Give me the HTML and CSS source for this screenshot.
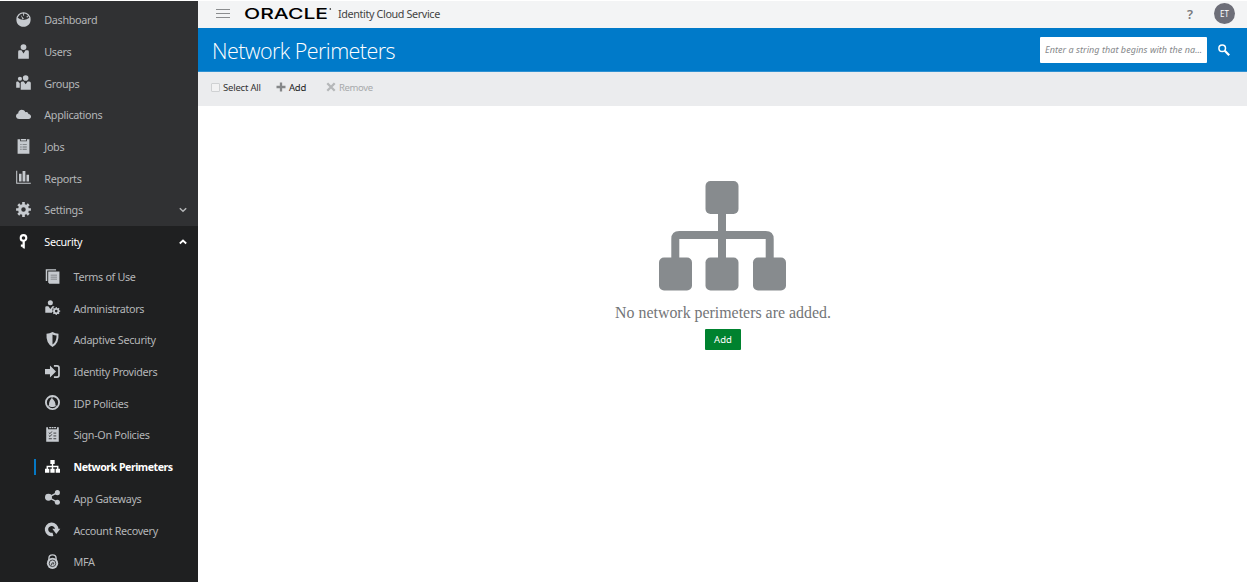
FILE: index.html
```html
<!DOCTYPE html>
<html lang="en">
<head>
<meta charset="utf-8">
<title>Network Perimeters</title>
<link rel="stylesheet" href="styles.css">
</head>
<body>
<div class="app">
<nav class="sidebar">
  <ul class="menu">
    <li class="item"><svg class="icon" viewBox="0 0 16 16"><path fill-rule="evenodd" d="M8 .3a7.600 7.600 0 0 1 7.600 7.600C15.600 12.400 12.500 15.700 8 15.700S.4 12.400.4 7.900A7.600 7.600 0 0 1 8 .3zM1.800 6.200q2.500 2.300 6.200 2.300t6.200-2.300Q12.300 1.600 8 1.600T1.800 6.200z"/><path d="m5 3 3.500 4.500L7 8zM7.600 1h1v3h-1zM11 5l2.500-1.500L12 6z"/></svg><span>Dashboard</span></li>
    <li class="item"><svg class="icon" viewBox="0 0 16 16"><circle cx="8" cy="3.300" r="3.100"/><path d="M2.300 15.700V8.200q0-1.500 1.500-1.500h2L8 10l2.200-3.300h2q1.500 0 1.500 1.500v7.500z"/></svg><span>Users</span></li>
    <li class="item"><svg class="icon" viewBox="0 0 16 16"><circle cx="10.300" cy="3.200" r="3"/><circle cx="4.200" cy="4" r="2.200"/><path d="M5 15.700V8.400q0-1.600 1.500-1.600h1.700l2.100 3 2.100-3h1.700q1.700 0 1.700 1.600v7.300zM.2 13.500V8q0-1.200 1.200-1.200h.8l1.800 2v4.700z"/></svg><span>Groups</span></li>
    <li class="item"><svg class="icon" viewBox="0 0 16 16"><path d="M3.500 12.800C-.9 12.800-.9 7.500 2.300 7 2.500 2 8.500 2 10 5.500c2-.8 3.200.5 3.200 2 3.900.3 3.600 5.300.2 5.300z"/></svg><span>Applications</span></li>
    <li class="item"><svg class="icon" viewBox="0 0 16 16"><path d="M1.700.3h2.700v2.200h7.200V.3h2.700v15.500H1.700z"/><path d="M5.200 0h5.600v1.700H5.200z"/><path class="cut" d="M4.500 5.500H6v1H4.500zm2.500 0h4.500v1H7zM4.500 8H6v1H4.500zM7 8h4.500v1H7zm-2.500 2.500H6v1H4.500zm2.500 0h4.500v1H7z"/></svg><span>Jobs</span></li>
    <li class="item"><svg class="icon" viewBox="0 0 16 16"><path d="M.2.700h1.100v12.800h14.500v1.200H.2zM3.200 4h2.700v8.300H3.200zM7 1h3v11.300H7zM11.200 5h2.700v7.300h-2.700z"/></svg><span>Reports</span></li>
    <li class="item"><svg class="icon" viewBox="0 0 16 16"><circle class="line gear-ring" cx="8" cy="8" r="4.100"/><path class="line gear-teeth" d="M8 .1v3m0 9.800v3M.1 8h3m9.800 0h3M2.400 2.400l2.100 2.100m7 7 2.100 2.100m0-11.200-2.100 2.100m-7 7-2.100 2.100"/></svg><span>Settings</span><svg class="chevron" viewBox="0 0 8 6"><path class="line" d="m.8 1.300 3.200 3 3.200-3"/></svg></li>
  </ul>
  <div class="section">
    <div class="item open"><svg class="icon" viewBox="0 0 16 16"><circle class="line key" cx="8" cy="4.200" r="3"/><path d="M7 7h2.400v8.800L7 15v-1.500h-1.800v-2.300H7z"/></svg><span>Security</span><svg class="chevron" viewBox="0 0 8 6"><path class="line strong" d="m.8 4.500 3.200-3 3.200 3"/></svg></div>
    <ul class="submenu">
      <li class="item"><svg class="icon" viewBox="0 0 16 16"><path d="M.8.200h11v1.500H2.400v11.100H.8zM3.400 2.700h12v13H4.700l-1.300-1.300z"/><path class="cut" d="M6 6h6.800v.9H6zm0 2.200h6.800v.9H6zm0 2.200h6.800v.9H6z"/></svg><span>Terms of Use</span></li>
      <li class="item"><svg class="icon" viewBox="0 0 16 16"><circle cx="5.700" cy="2.900" r="2.700"/><path d="M.3 13.500V8q0-1.300 1.200-1.300h2.100l2.100 3 2.200-3h2.300L8 9.300l-.5 4.200z"/><circle class="line ring" cx="12" cy="11.800" r="2.400"/><path class="line teeth" d="M12 7.500v1.500m0 5.500v1.500m-4.300-4.200h1.500m5.500 0h1.500M9 8.800l1 1m4 4 1 1m0-6-1 1m-4 4-1 1"/></svg><span>Administrators</span></li>
      <li class="item"><svg class="icon" viewBox="0 0 16 16"><path fill-rule="evenodd" d="M8 .1q3 1.700 6.400 1.700Q15.200 12 8 15.900.8 12 1.600 1.800 5 1.800 8 .1zM8 2.600v10.800Q12.500 10.500 12.300 3.800 10 3.700 8 2.600z"/></svg><span>Adaptive Security</span></li>
      <li class="item"><svg class="icon" viewBox="0 0 16 16"><path d="M0 5.200h5.300V1.600L11.700 8l-6.400 6.400v-3.600H0z"/><path class="line bracket" d="M9.500 2h3.300q2.100 0 2.100 2v8q0 2-2.100 2H9.500"/></svg><span>Identity Providers</span></li>
      <li class="item"><svg class="icon" viewBox="0 0 16 16"><circle class="line globe" cx="8" cy="8" r="7"/><path d="M4.300 11.700C4 7.500 5.300 5 7.300 3.500c2.700 2 4.200 4.500 3.900 8.200-1.500 1.600-5.500 1.600-6.900 0z"/><path class="line thin" d="m4.500 11.500-2.500 1m9-1 3 1M7.300 4l.5-2.500"/></svg><span>IDP Policies</span></li>
      <li class="item"><svg class="icon" viewBox="0 0 16 16"><path d="M1.300.2h2v2.100h9.400V.2h2v15.600H1.300z"/><path d="M4.500 0h2v1.400h-2zm2.600 0h2v1.400h-2zm2.600 0h2v1.400h-2z"/><path class="cutline" d="m4 6 1.300 1.200 2-2.400M9 6.500h3M4 9l1.300 1.200 2-2.400M9 9.500h3m-8 3h3.300m1.700 0h3"/></svg><span>Sign-On Policies</span></li>
      <li class="item current"><svg class="icon" viewBox="0 0 16 16"><path d="M5.700 1h4.600v4.300H5.700zM0 10.500h4.600v4.200H0zm5.700 0h4.600v4.200H5.700zm5.700 0H16v4.200h-4.600z"/><path class="line" d="M8 5v6M2.400 11V8h11.200v3"/></svg><span>Network Perimeters</span></li>
      <li class="item"><svg class="icon" viewBox="0 0 16 16"><circle cx="3.700" cy="7.800" r="3.700"/><circle cx="13.200" cy="2.800" r="2.700"/><circle cx="13.200" cy="13" r="2.700"/><path class="line" d="M13 2.900 3.700 7.800l9.300 5.200"/></svg><span>App Gateways</span></li>
      <li class="item"><svg class="icon" viewBox="0 0 16 16"><path class="line recover" d="M8.500 13.200A5.500 5.500 0 1 1 12.600 8"/><path d="M7.800 7.300H16.300L12 12.800z"/></svg><span>Account Recovery</span></li>
      <li class="item"><svg class="icon" viewBox="0 0 16 16"><path class="line" d="M4.200 7V4.500Q4.200.9 8 .9t3.800 3.600V7"/><circle cx="8" cy="9.900" r="6"/><circle class="cutline" cx="8" cy="9.900" r="3.500"/><path class="cutline" d="m6.800 12 .7-2.500h2l-.7 1.700"/></svg><span>MFA</span></li>
    </ul>
  </div>
</nav>
<main class="main">
  <header class="topbar">
    <svg class="burger" viewBox="0 0 14 9"><path d="M0 .5h14M0 4.500h14M0 8.500h14"/></svg>
    <svg class="brand" viewBox="0 0 90 22"><text class="brand-name" x="0" y="16" textLength="84" lengthAdjust="spacingAndGlyphs">ORACLE</text><circle cx="86.300" cy="6" r=".8"/></svg>
    <span class="product">Identity Cloud Service</span>
    <span class="help">?</span>
    <span class="avatar">ET</span>
  </header>
  <div class="titlebar">
    <h1>Network Perimeters</h1>
    <div class="search">Enter a string that begins with the na...</div>
    <svg class="magnifier" viewBox="0 0 12 12"><circle cx="4.200" cy="4.200" r="3.300"/><path class="handle" d="m6.800 6.800 4.400 4.400"/></svg>
  </div>
  <div class="toolbar">
    <span class="checkbox"></span><span class="tool select">Select All</span>
    <svg class="plus" viewBox="0 0 10 10"><path d="M5 .5v9M.5 5h9"/></svg><span class="tool add">Add</span>
    <svg class="cross" viewBox="0 0 10 10"><path d="m1.300 1.300 7.400 7.400m0-7.400L1.300 8.700"/></svg><span class="tool remove">Remove</span>
  </div>
  <section class="empty">
    <svg class="network" viewBox="0 0 128 110"><rect x="46.500" y="0" width="33" height="33" rx="5"/><rect x="0" y="76.500" width="33" height="33" rx="5"/><rect x="46.500" y="76.500" width="33" height="33" rx="5"/><rect x="94" y="76.500" width="33" height="33" rx="5"/><path d="M63 32v46M16.300 78V58q0-4 4-4h86.400q4 0 4 4v20"/></svg>
    <p>No network perimeters are added.</p>
    <button class="primary">Add</button>
  </section>
</main>
</div>
</body>
</html>
```
FILE: styles.css
```css
* { box-sizing: border-box; }
body { margin: 0; background: #fff; font-family: "Noto Sans", "Open Sans", sans-serif; font-size: 11px; }
ul { list-style: none; margin: 0; padding: 0; }
.app { display: flex; width: 1247px; height: 581px; margin-top: 1px; }
.sidebar { width: 198px; flex: none; display: flex; flex-direction: column; background: #303133; color: #b4b6b8; }
.menu { padding-top: 3px; height: 225px; }
.section { flex: 1; background: #1f2021; }
.item { display: flex; align-items: center; height: 31.700px; padding: 0 11px 0 16px; font-size: 10.800px; letter-spacing: -0.330px; white-space: nowrap; }
.item span { margin-left: 13.300px; }
.icon { width: 15px; height: 15px; flex: none; fill: #c6cacf; stroke: none; color: #c6cacf; margin-bottom: 1px; overflow: visible; }
.line { fill: none; stroke: currentColor; stroke-width: 1.500; }
.thin { stroke-width: 1; }
.globe { stroke-width: 2; }
.gear-ring { stroke-width: 3.400; }
.gear-teeth { stroke-width: 2.800; }
.key { stroke-width: 2.200; }
.ring { stroke-width: 2; }
.teeth { stroke-width: 1.200; }
.bracket { stroke-width: 1.800; }
.recover { stroke-width: 3.600; }
.cut { fill: #6f7276; }
.cutline { fill: none; stroke: #3a3c3e; stroke-width: 1; }
.chevron { width: 8px; height: 6px; margin-left: auto; }
.strong { stroke-width: 1.800; }
.open, .open .icon, .current, .current .icon { color: #fff; fill: #fff; }
.submenu { padding-top: 3px; }
.submenu .item { padding-left: 45px; }
.submenu .item span { margin-left: 13.500px; }
.submenu .current { font-size: 10.600px; font-weight: 700; letter-spacing: -0.480px; padding-left: 34px; }
.current::before { content: ""; width: 2px; height: 16px; margin-right: 9px; background: #0578c4; }
.main { flex: 1; display: flex; flex-direction: column; }
.topbar { height: 27px; display: flex; align-items: center; padding: 0 12px 2px 18px; background: #f3f4f5; color: #444; }
.burger { width: 14px; height: 9px; fill: none; stroke: #8b8d8f; stroke-width: 1; }
.brand { width: 90px; height: 22px; margin-left: 14px; overflow: visible; }
.brand-name { font: 500 15.200px Inter, sans-serif; fill: #000; }
.product { margin-left: 4px; font-size: 10.800px; letter-spacing: -0.380px; }
.help { margin-left: auto; font-size: 13px; font-weight: 600; color: #77797c; }
.avatar { width: 21px; height: 21px; margin-left: 21px; border-radius: 50%; background: #6d6e78; color: #fff; font-size: 8px; line-height: 21px; text-align: center; }
.titlebar { height: 44px; display: flex; align-items: center; padding: 0 17px 0 14px; background: #007ac9; border-bottom: 1px solid #2f91d2; }
h1 { margin: 0; padding-top: 2px; color: #fff; font: 300 21.500px "Open Sans", "Noto Sans", sans-serif; letter-spacing: -0.540px; }
.search { width: 167px; height: 26px; margin-left: auto; padding-left: 5px; border-radius: 1px; background: #fff; color: #85878a; font-size: 9px; font-style: italic; letter-spacing: 0.050px; line-height: 26px; white-space: nowrap; }
.magnifier { width: 12px; height: 12px; margin-left: 11px; fill: none; stroke: #fff; stroke-width: 1.500; }
.handle { stroke-width: 2.200; }
.toolbar { height: 34px; display: flex; align-items: center; padding: 0 0 4px 13px; background: #ebecee; font-size: 9.500px; letter-spacing: -0.200px; color: #333; }
.checkbox { width: 9px; height: 9px; border: 1px solid #cfd1d3; border-radius: 1px; background: #f2f2f3; }
.select { width: 53px; margin-left: 3px; }
.plus, .cross { width: 10px; height: 10px; fill: none; stroke: #858789; stroke-width: 2.300; }
.cross { stroke: #b5b7b9; }
.add { width: 37px; margin-left: 3px; color: #222; }
.remove { margin-left: 3px; letter-spacing: -0.350px; color: #a7a9ab; }
.empty { display: flex; flex-direction: column; align-items: center; padding: 75px 0 0 1px; }
.network { width: 128px; height: 110px; fill: #878b8e; }
.network path { fill: none; stroke: #878b8e; stroke-width: 8; }
.empty p { margin: 13px 0 7px; color: #737577; font: 15.900px/18px "Liberation Serif", serif; }
.primary { width: 36px; height: 21px; padding: 0; border: 0; border-radius: 1px; background: #00822f; color: #fff; font: 9.500px "Noto Sans", sans-serif; }
```
